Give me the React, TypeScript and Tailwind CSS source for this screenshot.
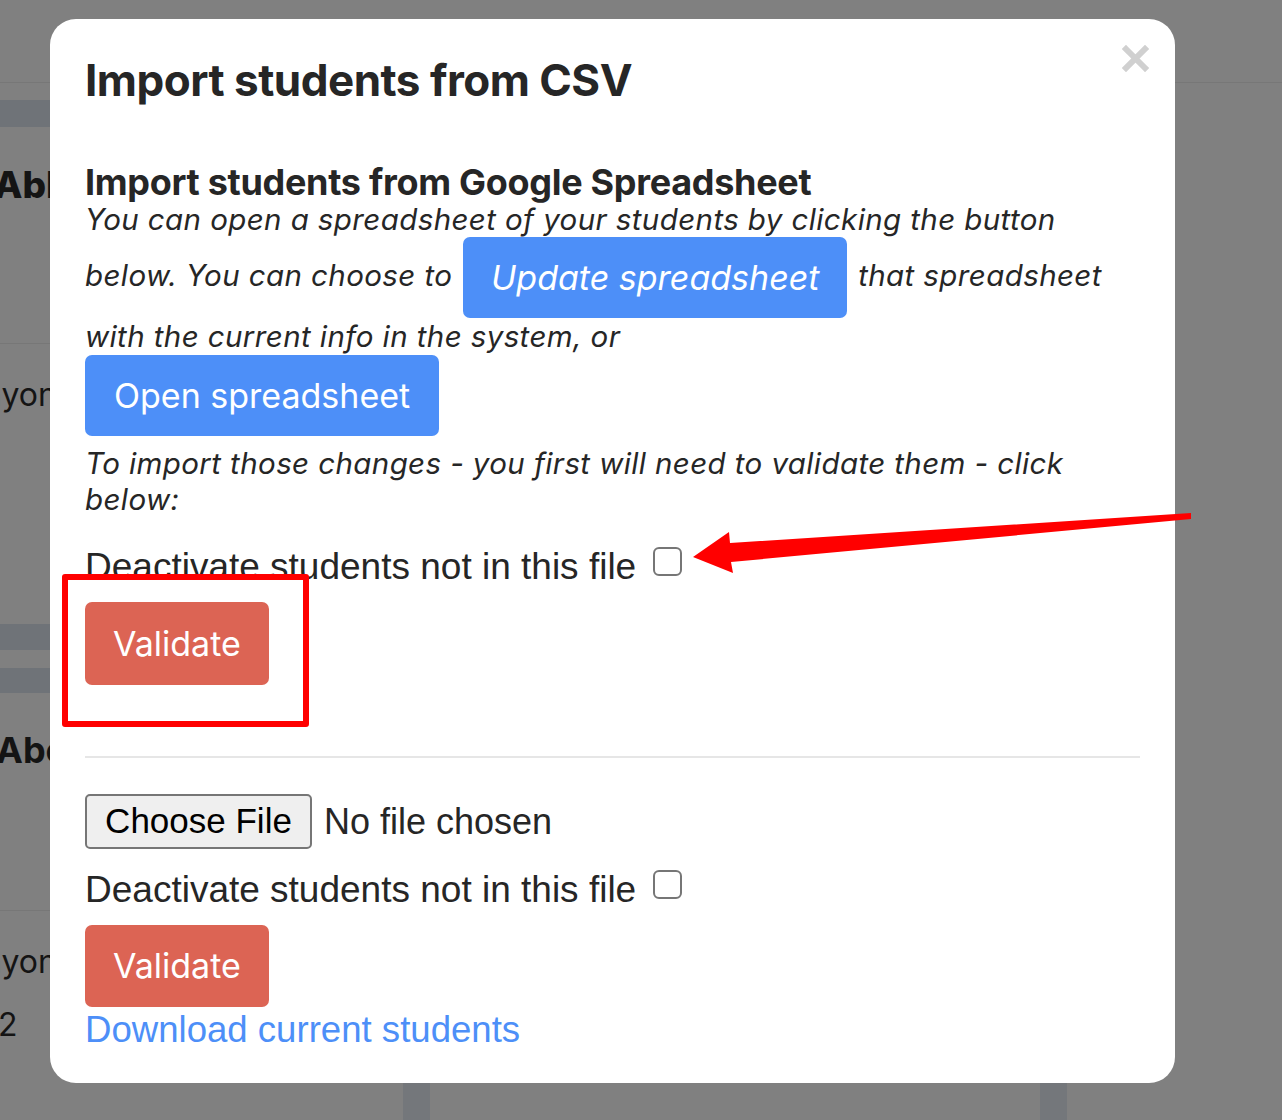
import React from 'react';

const sys = { fontFamily: 'Inter, "Noto Sans", sans-serif' };
const helv = { fontFamily: '"Liberation Sans", Arial, sans-serif' };

function Checkbox() {
  return <span className="inline-block w-[29px] h-[29px] rounded-[6px] border-2 border-[#767676] bg-white shrink-0" />;
}

function BackgroundPage() {
  return (
    <div className="flex flex-col h-full text-[#141414]" style={sys}>
      <div className="h-[83px] border-b border-[#777777]" />
      <div className="mt-[17px] h-[27px] w-[120px] bg-[#6f7378]" />
      <div className="mt-[36px] -ml-[6px] text-[37px] font-extrabold leading-[44px]">Abbott</div>
      <div className="mt-[136px] h-px w-[120px] bg-[#777777]" />
      <div className="mt-[31px] -ml-[17px] text-[32px] leading-[40px]">nyon</div>
      <div className="mt-[209px] h-[26px] w-[120px] bg-[#6f7378]" />
      <div className="mt-[18px] h-[25px] w-[120px] bg-[#6f7378]" />
      <div className="mt-[35px] -ml-[4px] text-[36px] font-bold leading-[44px]">Abel</div>
      <div className="mt-[138px] h-px w-[120px] bg-[#777777]" />
      <div className="mt-[31px] -ml-[17px] text-[32px] leading-[40px]">nyon</div>
      <div className="mt-[23px] -ml-[2px] text-[32px] leading-[40px]">2</div>
      <div className="mt-auto h-[37px] flex">
        <div className="ml-[403px] w-[27px] bg-[#74777b]" />
        <div className="ml-[610px] w-[27px] bg-[#74777b]" />
      </div>
    </div>
  );
}

function Modal() {
  return (
    <div className="absolute left-[50px] top-[19px] w-[1125px] h-[1064px] bg-white rounded-[26px] px-[35px] pt-[35px] text-[#262626]">
      <button className="absolute left-[1072px] top-[26px] w-[27px] h-[27px]" aria-label="close">
        <svg viewBox="0 0 27 27" width="27" height="27">
          <path d="M4 4 L23 23 M23 4 L4 23" stroke="#d0d0d0" strokeWidth="6" strokeLinecap="square" />
        </svg>
      </button>

      <h1 className="text-[44px] font-bold leading-[53px] tracking-[-0.5px]" style={sys}>Import students from CSV</h1>

      <h3 className="mt-[56px] text-[36px] font-bold leading-[38px] tracking-[-0.3px]" style={sys}>
        Import students from Google Spreadsheet
      </h3>
      <p className="text-[29.5px] italic leading-[36px] tracking-[0.4px]" style={sys}>
        You can open a spreadsheet of your students by clicking the button below. You can choose to{' '}
        <button className="inline-block align-[-4px] bg-[#4d8ff8] text-white italic text-[34px] leading-[41px] tracking-normal px-[28px] py-[20px] rounded-[7px] mx-[2px]">
          Update spreadsheet
        </button>{' '}
        that spreadsheet with the current info in the system, or
      </p>
      <div className="mt-px">
        <button className="bg-[#4d8ff8] text-white text-[34px] leading-[41px] px-[29px] py-[20px] rounded-[7px]" style={sys}>
          Open spreadsheet
        </button>
      </div>
      <p className="mt-[9px] text-[29.5px] italic leading-[36px] tracking-[0.4px]" style={sys}>
        To import those changes - you first will need to validate them - click below:
      </p>
      <label className="mt-[30px] flex items-start gap-[17px]">
        <span className="text-[37px] leading-[36px] mt-[2px]" style={helv}>Deactivate students not in this file</span>
        <Checkbox />
      </label>
      <div className="mt-[17px]">
        <button className="bg-[#dc6454] text-white text-[34px] leading-[41px] px-[28px] py-[21px] rounded-[7px]" style={sys}>
          Validate
        </button>
      </div>

      <hr className="mt-[71px] border-0 h-[2px] bg-[#e6e6e6]" />

      <div className="mt-[36px] flex items-center gap-[12px]" style={helv}>
        <span className="inline-flex items-center justify-center w-[227px] h-[55px] bg-[#efefef] border-2 border-[#767676] rounded-[5px] text-[35px] text-black">
          Choose File
        </span>
        <span className="text-[36px] text-[#262626]">No file chosen</span>
      </div>
      <label className="mt-[21px] flex items-start gap-[17px]">
        <span className="text-[37px] leading-[36px] mt-[2px]" style={helv}>Deactivate students not in this file</span>
        <Checkbox />
      </label>
      <div className="mt-[17px]">
        <button className="bg-[#dc6454] text-white text-[34px] leading-[42px] px-[28px] py-[20px] rounded-[7px]" style={sys}>
          Validate
        </button>
      </div>
      <a href="#" className="block text-[36.6px] leading-[46px] text-[#4d8ff8]" style={helv}>
        Download current students
      </a>
    </div>
  );
}

export default function App() {
  return (
    <div className="relative w-[1282px] h-[1120px] overflow-hidden bg-[#808080]">
      <BackgroundPage />
      <Modal />
      <div className="absolute left-[62px] top-[574px] w-[247px] h-[153px] border-[6px] border-[#ff0000] rounded-[3px]" />
      <svg className="absolute left-0 top-0" width="1282" height="1120" viewBox="0 0 1282 1120">
        <polygon points="1191,513 730,543 729,532 693,557 733,573 731,562 1191,519" fill="#ff0000" />
      </svg>
    </div>
  );
}
